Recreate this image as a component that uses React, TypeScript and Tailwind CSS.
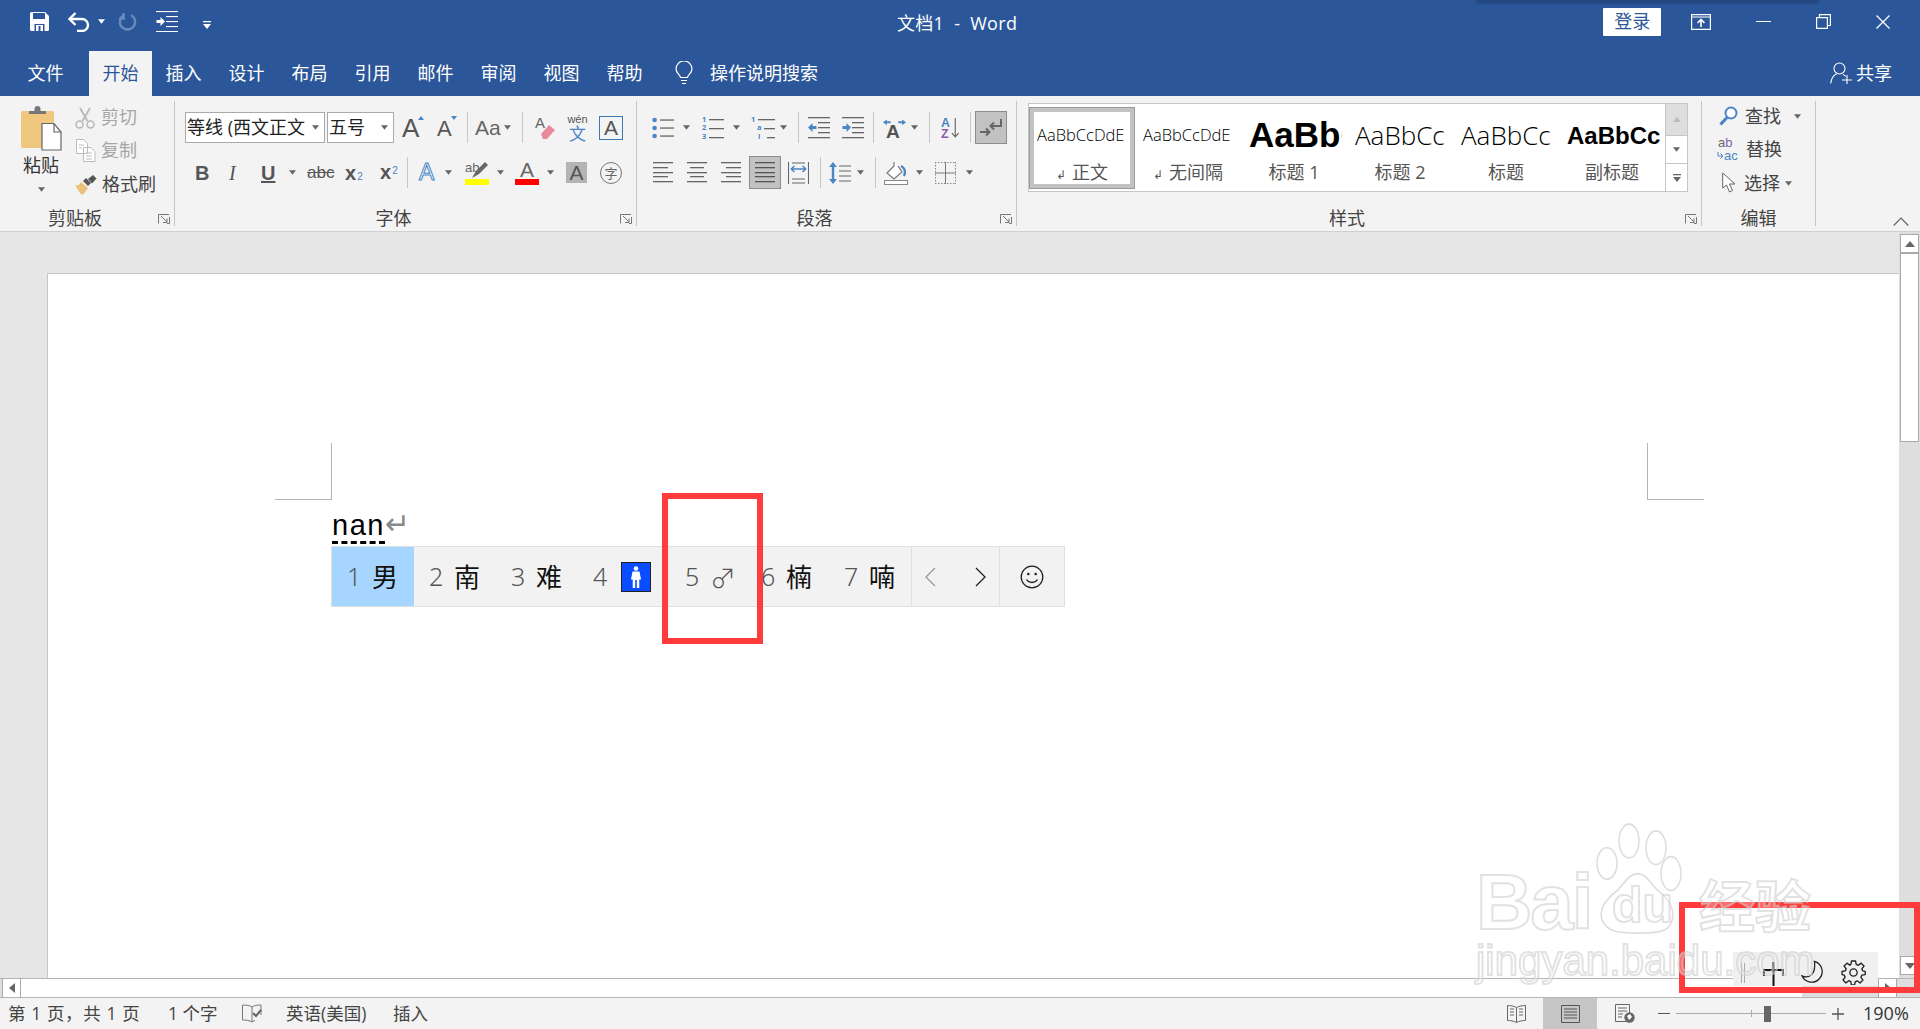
import React from "react";

const G = "#666666";
const B = "#4a86c5";

function Arrow({ className = "", color = "#666" }: { className?: string; color?: string }) {
  return (
    <svg viewBox="0 0 8 5" className={`w-[7px] h-[5px] shrink-0 ${className}`}>
      <path d="M0 0h8L4 5z" fill={color} />
    </svg>
  );
}

function Sep({ className = "" }: { className?: string }) {
  return <div className={`w-px h-[31px] bg-[#c8c8c8] shrink-0 ${className}`} />;
}

function Launcher() {
  return (
    <svg viewBox="0 0 12 10" className="absolute right-[4px] bottom-[2px] w-[12px] h-[10px]">
      <path d="M.5 9.5V.5H11M3 2l6 6M9 4.5V8.5H5M11.5 3v6.5H9" fill="none" stroke="#777" strokeWidth="1" />
    </svg>
  );
}

function Group({ w, label, children }: { w: string; label: string; children: React.ReactNode }) {
  return (
    <div className={`relative flex flex-col border-r border-[#c6c6c6] shrink-0 ${w}`}>
      {children}
      <div className="mt-auto h-[18px] leading-[20px] text-center pr-[24px] text-[18px] text-[#444]">{label}</div>
      <Launcher />
    </div>
  );
}

function Lines({ rows, w, h, anchor = "l", color = G }: { rows: number[]; w: number; h: number; anchor?: "l" | "c" | "r" | "j"; color?: string }) {
  const step = (h - 2) / (rows.length - 1);
  return (
    <svg viewBox={`0 0 ${w} ${h}`} width={w} height={h} className="shrink-0">
      {rows.map((l, i) => {
        const x = anchor === "l" || anchor === "j" ? 0 : anchor === "c" ? (w - l) / 2 : w - l;
        return <rect key={i} x={x} y={Math.round(i * step)} width={l} height="1.3" fill={color} />;
      })}
    </svg>
  );
}

function Bullets() {
  return (
    <svg viewBox="0 0 22 22" className="w-[22px] h-[22px] shrink-0">
      {[3, 11, 19].map((y) => (
        <g key={y}>
          <circle cx="2.6" cy={y} r="2.3" fill={B} />
          <rect x="8" y={y - 0.6} width="14" height="1.3" fill={G} />
        </g>
      ))}
    </svg>
  );
}

function Numbered() {
  return (
    <div className="flex w-[22px] h-[26px] shrink-0 items-center">
      <div className="w-[7px] shrink-0 text-[7.5px] leading-[8.500px] font-bold text-[#4a86c5]">
        <div>1</div>
        <div>2</div>
        <div>3</div>
      </div>
      <svg viewBox="0 0 15 24" className="w-[15px] h-[24px] shrink-0">
        {[3, 12, 21].map((y) => (
          <rect key={y} x="0" y={y} width="15" height="1.3" fill={G} />
        ))}
      </svg>
    </div>
  );
}

function Multi() {
  return (
    <div className="flex w-[24px] h-[26px] shrink-0 items-center">
      <div className="w-[13px] shrink-0 text-[7.5px] leading-[8.500px] font-bold text-[#4a86c5]">
        <div>1</div>
        <div className="pl-[6px]">a</div>
        <div className="pl-[7px]">i</div>
      </div>
      <svg viewBox="0 0 11 24" className="w-[11px] h-[24px] shrink-0 overflow-visible">
        <rect x="-6" y="3" width="17" height="1.3" fill={G} />
        <rect x="0" y="12" width="11" height="1.3" fill={G} />
        <rect x="3" y="21" width="8" height="1.3" fill={G} />
      </svg>
    </div>
  );
}

function IndentIcon({ out = false }: { out?: boolean }) {
  return (
    <svg viewBox="0 0 22 22" className="w-[22px] h-[22px] shrink-0">
      <rect y="0" width="22" height="1.3" fill={G} />
      <rect x="10" y="5" width="12" height="1.3" fill={G} />
      <rect x="10" y="10" width="12" height="1.3" fill={G} />
      <rect x="10" y="15" width="12" height="1.3" fill={G} />
      <rect y="20" width="22" height="1.3" fill={G} />
      {out ? (
        <path d="M0 10.5l4.5-4.5v3h4v3h-4v3z" fill={B} />
      ) : (
        <path d="M9 10.5L4.5 6v3H.5v3h4v3z" fill={B} />
      )}
    </svg>
  );
}

function Cell({ d, h, selected, className = "" }: { d: string; h: React.ReactNode; selected?: boolean; className?: string }) {
  return (
    <div className={`flex items-center pl-[15px] h-full shrink-0 ${selected ? "bg-[#a6d5ff]" : ""} ${className}`}>
      <span className="w-[25px] text-[25px] font-light text-[#555] font-['Noto_Sans']">{d}</span>
      {h}
    </div>
  );
}

function Hz({ t }: { t: string }) {
  return <span className="text-[26px] text-[#111] font-normal leading-none">{t}</span>;
}

function StyleItem({ selected, preview, label, arrow }: { selected?: boolean; preview: React.ReactNode; label: string; arrow?: boolean }) {
  return (
    <div className={`w-[106px] h-[82px] shrink-0 border ${selected ? "border-[#999]" : "border-transparent"}`}>
      <div className={`h-full flex flex-col border-[4px] overflow-hidden ${selected ? "border-[#c2c2c2]" : "border-transparent"}`}>
        <div className="h-[48px] pl-[3px] flex items-center overflow-hidden whitespace-nowrap text-black">{preview}</div>
        <div className="mt-[5px] h-[14px] leading-[14px] text-[18px] text-center text-[#555] whitespace-nowrap">
          {arrow && <span className="text-[12px] mr-[6px]">↲</span>}
          {label}
        </div>
      </div>
    </div>
  );
}

function TitleBar() {
  return (
    <div className="h-[51px] shrink-0 flex items-center pb-[8px] text-white relative">
      <svg viewBox="0 0 19 19" className="ml-[30px] w-[19px] h-[19px] shrink-0">
        <path d="M0 1.5A1.5 1.5 0 0 1 1.5 0H15l4 4v13.5a1.5 1.5 0 0 1-1.5 1.5h-16A1.5 1.5 0 0 1 0 17.500z" fill="#fff" />
        <rect x="3" y="1" width="12" height="6" fill="#2b579a" />
        <path d="M4.500 19v-7h10v7z" fill="#2b579a" />
        <rect x="6" y="13" width="7" height="6" fill="#fff" />
        <rect x="8.500" y="14" width="2" height="5" fill="#2b579a" />
      </svg>
      <svg viewBox="0 0 22 20" className="ml-[19px] w-[22px] h-[20px] shrink-0">
        <path d="M3 7h11a6 6 0 0 1 0 12H9" fill="none" stroke="#fff" strokeWidth="2.400" />
        <path d="M7.500 1L1.500 7l6 6" fill="none" stroke="#fff" strokeWidth="2.400" />
      </svg>
      <Arrow className="ml-[8px]" color="#fff" />
      <svg viewBox="0 0 20 20" className="ml-[13px] w-[19px] h-[19px] shrink-0">
        <path d="M6 3.500A8 8 0 1 0 14 3.500M6 1v6H1" fill="none" stroke="#6a8cbc" strokeWidth="2.400" />
      </svg>
      <svg viewBox="0 0 22 21" className="ml-[19px] w-[22px] h-[21px] shrink-0">
        <rect width="22" height="1.100" fill="#fff" />
        <rect x="10" y="5" width="12" height="1.100" fill="#fff" />
        <rect x="10" y="10" width="12" height="1.100" fill="#fff" />
        <rect x="10" y="15" width="12" height="1.100" fill="#fff" />
        <rect y="20" width="22" height="1.100" fill="#fff" />
        <path d="M9 10.500L4.500 6v3H.5v3h4v3z" fill="#fff" />
      </svg>
      <svg viewBox="0 0 8 8" className="ml-[25px] mt-[7px] w-[8px] h-[8px] shrink-0">
        <rect width="8" height="1.300" fill="#fff" />
        <path d="M0 3h8L4 8z" fill="#fff" />
      </svg>
      <div className="ml-[686px] mt-[3px] text-[18px] leading-none whitespace-pre tracking-[0.3px]">文档1  -  Word</div>
      <div className="ml-[586px] w-[58px] h-[28px] rounded-[1px] bg-white text-[#2b579a] text-[18px] flex items-center justify-center">登录</div>
      <svg viewBox="0 0 20 16" className="ml-[30px] w-[20px] h-[16px] shrink-0">
        <path d="M.6.6h18.800v14.800H.6zM1 3h18" fill="none" stroke="#fff" strokeWidth="1.200" />
        <path d="M10 13V6M6.500 9l3.500-3.500L13.500 9" fill="none" stroke="#fff" strokeWidth="1.600" />
      </svg>
      <div className="ml-[45px] w-[15px] h-[1.500px] bg-white shrink-0" />
      <svg viewBox="0 0 15 15" className="ml-[45px] w-[15px] h-[15px] shrink-0">
        <path d="M.6 3.600h10.800v10.800H.6zM3.500 3.500V.6h10.900v10.900h-3" fill="none" stroke="#fff" strokeWidth="1.200" />
      </svg>
      <svg viewBox="0 0 14 14" className="ml-[45px] w-[14px] h-[14px] shrink-0">
        <path d="M.5.5l13 13M13.500.5l-13 13" fill="none" stroke="#fff" strokeWidth="1.300" />
      </svg>
    </div>
  );
}

function TabRow() {
  const tabs = ["文件", "开始", "插入", "设计", "布局", "引用", "邮件", "审阅", "视图", "帮助"];
  return (
    <div className="h-[45px] shrink-0 flex items-stretch pl-[14px] text-white text-[18px]">
      {tabs.map((t, i) => (
        <div key={t} className={`w-[63px] flex items-center justify-center ${i === 1 ? "ml-[12px] bg-[#f3f3f3] text-[#2b579a]" : ""}`}>
          {t}
        </div>
      ))}
      <svg viewBox="0 0 18 24" className="ml-[19px] mt-[10px] w-[18px] h-[24px] shrink-0">
        <path d="M5.500 16.500C5 13.500 1 12 1 8a8 8 0 0 1 16 0c0 4-4 5.500-4.500 8.500zM6 19.500h6M7 22.500h4" fill="none" stroke="#fff" strokeWidth="1.200" />
      </svg>
      <div className="ml-[17px] flex items-center">操作说明搜索</div>
      <svg viewBox="0 0 22 22" className="ml-[1012px] mt-[11px] w-[22px] h-[22px] shrink-0">
        <circle cx="9.500" cy="6.500" r="5.500" fill="none" stroke="#fff" strokeWidth="1.100" />
        <path d="M.7 21.500c.5-5 3.300-8.500 5.800-9.800M13 12.500c1 .5 2 1.200 2.700 2M12 18h10M17 13v9" fill="none" stroke="#fff" strokeWidth="1.100" />
      </svg>
      <div className="ml-[4px] flex items-center">共享</div>
    </div>
  );
}

function Clipboard() {
  return (
    <Group w="w-[175px]" label="剪贴板">
      <div className="flex">
        <div className="ml-[21px] w-[40px] flex flex-col items-center">
          <svg viewBox="0 0 41 45" className="mt-[5px] w-[41px] h-[45px] shrink-0">
            <rect x="0" y="5" width="33" height="37" rx="2" fill="#efc77f" />
            <path d="M8 8V5h5.500V3a3 3 0 0 1 6 0v2H25v3z" fill="#777" />
            <path d="M21 17.500h12l7 8.500v18H21z" fill="#fff" stroke="#666" strokeWidth="1.200" />
            <path d="M33 17.500V26h7" fill="none" stroke="#666" strokeWidth="1.200" />
          </svg>
          <div className="mt-[5px] text-[18px] leading-[18px] text-[#333] whitespace-nowrap">粘贴</div>
          <Arrow className="mt-[13px]" />
        </div>
        <div className="ml-[14px] flex flex-col">
          <div className="flex items-center h-[33px]">
            <svg viewBox="0 0 20 22" className="w-[20px] h-[22px] shrink-0">
              <path d="M5 1l7.500 13M15 1L7.500 14" fill="none" stroke="#b8b8b8" strokeWidth="1.800" />
              <circle cx="4.500" cy="17.500" r="3.500" fill="none" stroke="#b8b8b8" strokeWidth="1.500" />
              <circle cx="15.500" cy="17.500" r="3.500" fill="none" stroke="#b8b8b8" strokeWidth="1.500" />
            </svg>
            <span className="ml-[6px] text-[18px] text-[#a6a6a6]">剪切</span>
          </div>
          <div className="flex items-center h-[33px]">
            <svg viewBox="0 0 20 23" className="w-[20px] h-[23px] shrink-0 ml-[1px] -mr-[1px]">
              <path d="M.5.5h7l4 4v10H.5zM7.500 8.500h7.500l4 4v10H7.500z" fill="#fff" stroke="#bbb" />
              <path d="M3 6h5M3 9h3M10 14h6M10 17h6M10 20h6" stroke="#bbb" />
            </svg>
            <span className="ml-[6px] text-[18px] text-[#a6a6a6]">复制</span>
          </div>
          <div className="flex items-center h-[33px] mt-[1px]">
            <svg viewBox="0 0 23 20" className="w-[23px] h-[20px] -ml-[1px] -mr-[1px] shrink-0">
              <path d="M1 10c3 1 4 0 6-3l7 6c-2 3-4 6-6 7C6 18 3 14 1 10z" fill="#ebc17b" />
              <path d="M9 6l3-3 5 5-3 3z" fill="#555" />
              <path d="M14 4l5-4 3.500 3.500-4.500 5z" fill="#555" />
            </svg>
            <span className="ml-[6px] text-[18px] text-[#444] whitespace-nowrap">格式刷</span>
          </div>
        </div>
      </div>
    </Group>
  );
}

function FontGroup() {
  return (
    <Group w="w-[462px]" label="字体">
      <div className="mt-[10px] h-[33px] flex items-center pl-[10px]">
        <div className="w-[140px] h-[31px] shrink-0 bg-white border border-[#aaa] flex items-center pl-[1px] text-[18px] text-[#222] whitespace-nowrap">
          等线 (西文正文
          <Arrow className="ml-auto mr-[5px]" />
        </div>
        <div className="ml-[2px] w-[67px] h-[31px] shrink-0 bg-white border border-[#aaa] flex items-center pl-[1px] text-[18px] text-[#222]">
          五号
          <Arrow className="ml-auto mr-[5px]" />
        </div>
        <div className="ml-[8px] w-[20px] h-[24px] relative text-[26px] leading-[24px] text-[#555] shrink-0 font-['Liberation_Sans']">
          A
          <svg viewBox="0 0 6 4" className="absolute -right-[2px] top-[0px] w-[6px] h-[4px]"><path d="M3 0l3 4H0z" fill={B} /></svg>
        </div>
        <div className="ml-[15px] w-[19px] h-[24px] relative text-[22px] leading-[26px] text-[#555] shrink-0 font-['Liberation_Sans']">
          A
          <svg viewBox="0 0 6 4" className="absolute -right-[1px] top-[0px] w-[6px] h-[4px]"><path d="M0 0h6L3 4z" fill={B} /></svg>
        </div>
        <Sep className="ml-[11px]" />
        <span className="ml-[7px] w-[25px] text-[21px] leading-none text-[#666] font-['Liberation_Sans'] whitespace-nowrap shrink-0">Aa</span>
        <Arrow className="ml-[4px]" />
        <Sep className="ml-[11px]" />
        <div className="ml-[12px] w-[20px] h-[24px] shrink-0 flex flex-col relative">
          <span className="h-[14px] text-[15px] leading-[14px] text-[#666] font-['Liberation_Sans']">A</span>
          <svg viewBox="0 0 20 24" className="absolute left-0 top-0 w-[20px] h-[24px]">
            <path d="M6 18l8-9 6 5-8 9h-4z" fill="#e98a9a" />
          </svg>
        </div>
        <div className="ml-[12px] w-[21px] shrink-0 flex flex-col items-center leading-none">
          <span className="text-[11px] leading-[11px] font-['Liberation_Sans'] text-[#555]">wén</span>
          <span className="text-[17px] leading-[17px] text-[#4a86c5]">文</span>
        </div>
        <div className="ml-[11px] w-[24px] h-[24px] border border-[#3f78b4] flex items-center justify-center text-[21px] leading-none text-[#555] font-['Liberation_Sans'] shrink-0">A</div>
      </div>
      <div className="mt-[12px] h-[33px] flex items-center pl-[20px] font-['Liberation_Sans'] text-[#555]">
        <span className="w-[12px] text-[20px] font-bold leading-none shrink-0">B</span>
        <span className="ml-[22px] w-[12px] text-[20px] italic font-['Liberation_Serif'] leading-none shrink-0">I</span>
        <span className="ml-[20px] w-[15px] text-[20px] underline font-bold leading-none shrink-0">U</span>
        <Arrow className="ml-[13px]" />
        <span className="ml-[11px] w-[24px] text-[17px] line-through leading-none shrink-0">abc</span>
        <span className="ml-[14px] w-[19px] text-[20px] font-bold leading-none shrink-0 whitespace-nowrap">x<span className="text-[10px] font-normal text-[#4a86c5] ml-[1px]">2</span></span>
        <span className="ml-[16px] w-[18px] text-[20px] font-bold leading-none shrink-0 whitespace-nowrap -mt-[2px]">x<sup className="text-[10px] font-normal text-[#4a86c5] ml-[1px]">2</sup></span>
        <Sep className="ml-[9px]" />
        <span className="ml-[11px] w-[17px] text-[23px] leading-none text-white shrink-0 [-webkit-text-stroke:1px_#4a86c5]">A</span>
        <Arrow className="ml-[9px]" />
        <div className="ml-[13px] w-[24px] h-[24px] flex flex-col shrink-0">
          <svg viewBox="0 0 24 18" className="w-[24px] h-[18px]">
            <text x="0" y="11" fontSize="13" fill="#666" fontFamily="Liberation Sans">ab</text>
            <path d="M7 17l4-7 9-9 3 3-9 9z" fill="#666" />
          </svg>
          <div className="h-[6px] bg-[#ffff00]" />
        </div>
        <Arrow className="ml-[8px]" />
        <div className="ml-[11px] w-[24px] h-[24px] flex flex-col items-center shrink-0">
          <span className="h-[18px] text-[21px] leading-[18px] text-[#666]">A</span>
          <div className="w-full h-[6px] bg-[#ff0000]" />
        </div>
        <Arrow className="ml-[8px]" />
        <div className="ml-[12px] w-[21px] h-[21px] bg-[#b4b4b4] flex items-center justify-center text-[21px] leading-none text-[#555] shrink-0">A</div>
        <div className="ml-[13px] w-[22px] h-[22px] rounded-full border-[1.500px] border-[#777] flex items-center justify-center text-[13px] text-[#666] shrink-0 font-['Noto_Sans_CJK_SC']">字</div>
      </div>
    </Group>
  );
}

function ParaGroup() {
  return (
    <Group w="w-[380px]" label="段落">
      <div className="mt-[10px] h-[33px] flex items-center pl-[15px]">
        <Bullets />
        <Arrow className="ml-[9px]" />
        <div className="ml-[12px]"><Numbered /></div>
        <Arrow className="ml-[9px]" />
        <div className="ml-[11px]"><Multi /></div>
        <Arrow className="ml-[5px]" />
        <Sep className="ml-[11px]" />
        <div className="ml-[9px]"><IndentIcon out /></div>
        <div className="ml-[12px]"><IndentIcon /></div>
        <Sep className="ml-[9px]" />
        <svg viewBox="0 0 24 20" className="ml-[9px] w-[23px] h-[20px] shrink-0">
          <text x="3" y="20" fontSize="20" fontWeight="700" fill="#555" fontFamily="Liberation Sans">A</text>
          <path d="M0 4l4-3v2h4v2H4v2zM24 4l-4-3v2h-4v2h4v2z" fill={B} />
        </svg>
        <Arrow className="ml-[5px]" />
        <Sep className="ml-[11px]" />
        <svg viewBox="0 0 20 24" className="ml-[11px] w-[19px] h-[23px] shrink-0">
          <text x="0" y="11" fontSize="13" fontWeight="700" fill={B} fontFamily="Liberation Sans">A</text>
          <text x="0" y="23" fontSize="13" fontWeight="700" fill="#8a5aa8" fontFamily="Liberation Sans">Z</text>
          <path d="M15 2v20M11.500 18l3.500 4 3.500-4" fill="none" stroke="#666" strokeWidth="1.200" />
        </svg>
        <Sep className="ml-[10px]" />
        <div className="ml-[4px] w-[32px] h-[33px] bg-[#c2c2c2] border border-[#8c8c8c] flex items-center justify-center shrink-0">
          <svg viewBox="0 0 22 20" className="w-[22px] h-[20px]">
            <path d="M21 1v7H11M14 4.500L10.500 8l3.500 3.500" fill="none" stroke="#666" strokeWidth="2" />
            <path d="M0 14h9M6 10.500L9.500 14 6 17.500" fill="none" stroke="#666" strokeWidth="2" />
          </svg>
        </div>
      </div>
      <div className="mt-[12px] h-[33px] flex items-center pl-[16px]">
        <Lines w={20} h={21} rows={[20, 15, 20, 15, 20]} />
        <div className="ml-[14px]"><Lines w={20} h={21} rows={[20, 14, 20, 14, 20]} anchor="c" /></div>
        <div className="ml-[14px]"><Lines w={20} h={21} rows={[20, 15, 20, 15, 20]} anchor="r" /></div>
        <div className="ml-[8px] w-[32px] h-[33px] bg-[#c2c2c2] border border-[#8c8c8c] flex items-center justify-center shrink-0">
          <Lines w={20} h={21} rows={[20, 20, 20, 20, 20]} color="#555" />
        </div>
        <svg viewBox="0 0 21 22" className="ml-[7px] w-[21px] h-[22px] shrink-0">
          <path d="M.5 0v22M20.500 0v22M4 1h13M4 21h13M4 17h13" stroke="#666" strokeWidth="1.100" fill="none" />
          <path d="M3 7h15M3 7l3.500-3M3 7l3.500 3M18 7l-3.500-3M18 7l-3.500 3" stroke={B} strokeWidth="1.500" fill="none" />
        </svg>
        <Sep className="ml-[11px]" />
        <svg viewBox="0 0 22 24" className="ml-[8px] w-[22px] h-[24px] shrink-0">
          <path d="M4 4v16" stroke={B} strokeWidth="2.400" />
          <path d="M0 6l4-5 4 5zM0 18l4 5 4-5z" fill={B} />
          <path d="M10 5h12M10 10h12M10 15h12M10 20h12" stroke={G} strokeWidth="1.200" />
        </svg>
        <Arrow className="ml-[6px]" />
        <Sep className="ml-[11px]" />
        <svg viewBox="0 0 24 24" className="ml-[8px] w-[24px] h-[24px] shrink-0">
          <path d="M10 1v4l-7 7 7 6 8-7-4-6" fill="#fff" stroke="#777" strokeWidth="1.200" />
          <path d="M17 5c4 2 5 6 3 10" fill="none" stroke={B} strokeWidth="2.400" />
          <rect x=".5" y="19.500" width="23" height="4" fill="#fff" stroke="#888" />
        </svg>
        <Arrow className="ml-[8px]" />
        <svg viewBox="0 0 21 22" className="ml-[12px] w-[21px] h-[22px] shrink-0">
          <path d="M.5 0v22M20.500 0v22M0 .5h21M0 21.500h21" stroke="#888" strokeDasharray="1.500 1.500" />
          <path d="M10.500 0v22M0 11h21" stroke="#777" />
        </svg>
        <Arrow className="ml-[10px]" />
      </div>
    </Group>
  );
}

function StyleGroup() {
  const scrollBtn = "flex-1 flex items-center justify-center border-t border-[#c6c6c6]";
  return (
    <Group w="w-[685px]" label="样式">
      <div className="mt-[2px] ml-[11px] w-[660px] h-[89px] flex items-center bg-white border border-[#c6c6c6]">
        <StyleItem selected arrow label="正文" preview={<span className="text-[16.500px] font-light">AaBbCcDdE</span>} />
        <StyleItem arrow label="无间隔" preview={<span className="text-[16.500px] font-light">AaBbCcDdE</span>} />
        <StyleItem label="标题 1" preview={<span className="text-[35px] font-bold font-['Liberation_Sans']">AaBbC</span>} />
        <StyleItem label="标题 2" preview={<span className="text-[26px] font-light">AaBbCc</span>} />
        <StyleItem label="标题" preview={<span className="text-[26px] font-light">AaBbCc</span>} />
        <StyleItem label="副标题" preview={<span className="text-[24px] font-bold font-['Liberation_Sans']">AaBbCc</span>} />
        <div className="ml-auto w-[22px] h-full flex flex-col border-l border-[#c6c6c6]">
          <div className="h-[31px] bg-[#dedede] flex items-center justify-center">
            <svg viewBox="0 0 8 5" className="w-[8px] h-[5px]"><path d="M4 0l4 5H0z" fill="#bbb" /></svg>
          </div>
          <div className={scrollBtn}><Arrow /></div>
          <div className={scrollBtn}>
            <svg viewBox="0 0 8 8" className="w-[8px] h-[8px]"><rect width="8" height="1.300" fill="#666" /><path d="M0 3h8L4 8z" fill="#666" /></svg>
          </div>
        </div>
      </div>
    </Group>
  );
}

function EditGroup() {
  const row = "flex items-center h-[30px] text-[18px] text-[#444]";
  return (
    <div className="relative flex flex-col w-[114px] shrink-0 border-r border-[#c6c6c6]">
      <div className={`${row} pl-[17px]`}>
        <svg viewBox="0 0 19 20" className="w-[19px] h-[20px] shrink-0">
          <circle cx="12" cy="7" r="5.500" fill="#fff" stroke={B} strokeWidth="2" />
          <path d="M8 11.500L1.500 18.500" stroke={B} strokeWidth="3.200" />
        </svg>
        <span className="ml-[7px]">查找</span>
        <Arrow className="ml-[13px]" />
      </div>
      <div className={`${row} pl-[15px] mt-[3px]`}>
        <div className="w-[23px] shrink-0 flex flex-col text-[13px] leading-[13px] font-['Liberation_Sans'] text-[#666]">
          <div className="pl-[1px] whitespace-nowrap">a<span className="text-[#8a5aa8]">b</span></div>
          <div className="flex items-center whitespace-nowrap text-[#4a86c5]">
            <svg viewBox="0 0 7 8" className="w-[7px] h-[8px] shrink-0">
              <path d="M1 0v4h5M3.500 1.500L6 4 3.500 6.500" fill="none" stroke={B} strokeWidth="1" />
            </svg>
            ac
          </div>
        </div>
        <span className="ml-[6px]">替换</span>
      </div>
      <div className={`${row} pl-[20px] mt-[4px]`}>
        <svg viewBox="0 0 14 22" className="w-[14px] h-[22px] shrink-0">
          <path d="M.7 1v15l3.800-3 3 7 3-1.500-3-6.500H13z" fill="#fff" stroke="#666" strokeWidth="1" />
        </svg>
        <span className="ml-[8px]">选择</span>
        <Arrow className="ml-[5px]" />
      </div>
      <div className="mt-auto h-[18px] leading-[20px] text-center text-[18px] text-[#444]">编辑</div>
    </div>
  );
}

function Ribbon() {
  return (
    <div className="h-[136px] shrink-0 bg-[#f3f3f3] border-b border-[#d0d0d0] flex py-[5px] text-[#444]">
      <Clipboard />
      <FontGroup />
      <ParaGroup />
      <StyleGroup />
      <EditGroup />
      <div className="flex-1 flex items-end justify-end pr-[11px]">
        <svg viewBox="0 0 16 9" className="w-[16px] h-[9px]">
          <path d="M.7 8.500L8 1l7.300 7.500" fill="none" stroke="#666" strokeWidth="1.200" />
        </svg>
      </div>
    </div>
  );
}

function Document() {
  return (
    <div className="flex-1 flex min-h-0 bg-[#e6e6e6]">
      <div className="w-[47px] shrink-0" />
      <div className="flex-1 mt-[41px] bg-white border-t border-l border-[#c6c6c6] relative pl-[284px] pt-[236px]">
        <div className="absolute left-[227px] top-[169px] w-[57px] h-[57px] border-r border-b border-[#b4b4b4]" />
        <div className="absolute left-[1599px] top-[169px] w-[57px] h-[57px] border-l border-b border-[#b4b4b4]" />
        <div className="flex items-start h-[36px]">
          <span className="border-b-[3px] border-dashed border-black text-[29px] leading-[31px] text-black tracking-[1.500px] font-['Liberation_Sans']">nan</span>
          <span className="-mt-[2px] text-[30px] leading-[32px] text-[#888] font-['DejaVu_Sans']">↵</span>
        </div>
        <div className="absolute left-[283px] top-[272px] w-[734px] h-[61px] flex items-stretch bg-[#f2f2f2] border border-[#dfdfdf]">
          <Cell selected d="1" h={<Hz t="男" />} className="w-[82px]" />
          <Cell d="2" h={<Hz t="南" />} className="w-[82px]" />
          <Cell d="3" h={<Hz t="难" />} className="w-[82px]" />
          <Cell
            d="4"
            className="w-[92px]"
            h={
              <div className="ml-[3px] w-[30px] h-[30px] bg-[#0a4cff] border border-[#222] flex items-center justify-center">
                <svg viewBox="0 0 12 22" className="w-[12px] h-[22px]">
                  <circle cx="6" cy="2.500" r="2.300" fill="#fff" />
                  <path d="M2.500 5.500h7l1.500 8H9.300V22H6.800v-8H5.200v8H2.700v-8.500H1z" fill="#fff" />
                </svg>
              </div>
            }
          />
          <Cell d="5" className="w-[76px]" h={<span className="text-[26px] leading-none text-[#555] font-['Noto_Sans_CJK_SC'] font-light">♂</span>} />
          <Cell d="6" h={<Hz t="楠" />} className="w-[83px]" />
          <Cell d="7" h={<Hz t="喃" />} className="w-[82px]" />
          <div className="w-[88px] shrink-0 border-l border-[#dfdfdf] flex items-center pl-[12px]">
            <svg viewBox="0 0 12 20" className="w-[12px] h-[20px]"><path d="M11 1L2 10l9 9" fill="none" stroke="#999" strokeWidth="1.300" /></svg>
            <svg viewBox="0 0 12 20" className="ml-[39px] w-[12px] h-[20px]"><path d="M1 1l9 9-9 9" fill="none" stroke="#222" strokeWidth="1.300" /></svg>
          </div>
          <div className="flex-1 border-l border-[#dfdfdf] flex items-center justify-center">
            <svg viewBox="0 0 24 24" className="w-[24px] h-[24px]">
              <circle cx="12" cy="12" r="10.800" fill="none" stroke="#222" strokeWidth="1.300" />
              <circle cx="8.300" cy="9" r="1.300" fill="#222" />
              <circle cx="15.700" cy="9" r="1.300" fill="#222" />
              <path d="M6.500 14.500c2.500 4 8.500 4 11 0" fill="none" stroke="#222" strokeWidth="1.300" />
            </svg>
          </div>
        </div>
      </div>
      <div className="w-[21px] shrink-0 bg-[#dedede] flex flex-col items-start pl-[1px]">
        <div className="mt-[2px] w-[19px] h-[19px] bg-white border border-[#aaa] flex items-center justify-center">
          <svg viewBox="0 0 10 6" className="w-[10px] h-[6px]"><path d="M5 0l5 6H0z" fill="#666" /></svg>
        </div>
        <div className="w-[19px] h-[189px] bg-white border border-[#aaa]" />
        <div className="mt-auto mb-[3px] w-[19px] h-[19px] bg-white border border-[#aaa] flex items-center justify-center">
          <svg viewBox="0 0 10 6" className="w-[10px] h-[6px]"><path d="M0 0h10L5 6z" fill="#666" /></svg>
        </div>
      </div>
    </div>
  );
}

function HScroll() {
  return (
    <div className="h-[20px] shrink-0 flex items-stretch bg-[#dedede] border-y border-[#b4b4b4]">
      <div className="ml-[2px] w-[19px] bg-white border-x border-[#aaa] flex items-center justify-center shrink-0">
        <svg viewBox="0 0 6 10" className="w-[6px] h-[10px]"><path d="M6 0v10L0 5z" fill="#666" /></svg>
      </div>
      <div className="w-[1781px] bg-white shrink-0" />
      <div className="w-[76px] shrink-0" />
      <div className="w-[19px] bg-white border-x border-[#aaa] flex items-center justify-center shrink-0">
        <svg viewBox="0 0 6 10" className="w-[6px] h-[10px]"><path d="M0 0v10l6-5z" fill="#666" /></svg>
      </div>
    </div>
  );
}

function StatusBar() {
  return (
    <div className="h-[31px] shrink-0 bg-[#f3f3f3] flex items-center text-[17.500px] text-[#444] pl-[8px]">
      <span className="w-[160px] shrink-0 whitespace-nowrap tracking-[0.6px]">第 1 页，共 1 页</span>
      <span className="w-[74px] shrink-0 whitespace-nowrap">1 个字</span>
      <div className="w-[44px] shrink-0">
        <svg viewBox="0 0 20 20" className="w-[20px] h-[20px]">
          <path d="M10 3C8 1.500 4 1 .5 1v15c3.500 0 7.500.5 9.500 2V3c2-1.500 5-2 9-2v10M10 18c1-.7 2-1.200 3-1.500" fill="none" stroke="#777" />
          <path d="M11 9l3 3 5-6" fill="none" stroke="#666" strokeWidth="2" />
        </svg>
      </div>
      <span className="w-[107px] shrink-0 whitespace-nowrap">英语(美国)</span>
      <span className="shrink-0">插入</span>
      <div className="flex-1" />
      <svg viewBox="0 0 19 18" className="w-[19px] h-[18px] shrink-0">
        <path d="M9.500 2.500C7 1 3 .5.500.5v15c2.500 0 6.500.5 9 2 2.500-1.500 6.500-2 9-2V.5c-2.500 0-6.500.5-9 2zM9.500 2.500v15M3 4h4M3 7h4M3 10h4M12 4h4M12 7h4M12 10h4" fill="none" stroke="#666" />
      </svg>
      <div className="ml-[17px] w-[54px] h-full bg-[#c6c6c6] flex items-center justify-center shrink-0">
        <svg viewBox="0 0 19 18" className="w-[19px] h-[18px]">
          <path d="M.5.500h18v17H.5zM3 4h13M3 7h13M3 10h13M3 13h13" fill="none" stroke="#555" />
        </svg>
      </div>
      <svg viewBox="0 0 20 19" className="ml-[18px] w-[20px] h-[19px] shrink-0">
        <path d="M.5.500h14v17H.5zM3 4h9M3 7h9M3 10h5M3 13h4" fill="none" stroke="#666" />
        <circle cx="14.500" cy="13.500" r="5.200" fill="#666" />
        <path d="M12 12l3-2 2 3-3 3z" fill="#fff" />
      </svg>
      <div className="ml-[23px] w-[12px] h-[1.500px] bg-[#555] shrink-0" />
      <div className="ml-[6px] w-[150px] h-[18px] relative shrink-0">
        <div className="absolute left-0 right-0 top-[8.500px] h-px bg-[#aaa]" />
        <div className="absolute left-[75px] top-[5px] w-px h-[7px] bg-[#aaa]" />
        <div className="absolute left-[88px] top-[1px] w-[7px] h-[16px] bg-[#666]" />
      </div>
      <svg viewBox="0 0 12 12" className="ml-[6px] w-[12px] h-[12px] shrink-0">
        <path d="M0 6h12M6 0v12" stroke="#555" strokeWidth="1.300" />
      </svg>
      <span className="ml-[19px] w-[57px] shrink-0 text-[18px] text-[#333]">190%</span>
    </div>
  );
}

function Overlays() {
  const wm = "absolute pointer-events-none whitespace-nowrap text-white/25 font-['Liberation_Sans'] [-webkit-text-stroke:2px_#cfcfcf99] blur-[0.6px]";
  return (
    <>
      <div className="absolute left-[1733px] top-[952px] w-[145px] h-[34px] bg-[#f0f0f0] flex items-center">
        <div className="ml-[8px] w-[4px] h-[20px] mt-[8px] border-l border-r border-[#aaa] shrink-0" />
        <svg viewBox="0 0 21 24" className="ml-[18px] mt-[10px] w-[21px] h-[24px] shrink-0">
          <path d="M1 14V8h19v6M10.500 0v24" fill="none" stroke="#111" strokeWidth="2" />
        </svg>
        <svg viewBox="0 0 24 24" className="ml-[17px] mt-[6px] w-[23px] h-[24px] shrink-0">
          <path d="M14 1a11 11 0 1 1-13 15c6 3 15 0 13-15z" fill="none" stroke="#222" strokeWidth="1.300" />
        </svg>
        <svg viewBox="0 0 24 24" className="ml-[17px] mt-[6px] w-[25px] h-[25px] shrink-0" fill="none" stroke="#222" strokeWidth="1.300" strokeLinejoin="round">
          <circle cx="12" cy="12" r="3.500" />
          <path d="M10 1h4l.6 3.200 2 .9L19.300 3l2.800 2.800-2.100 2.700.9 2L23.200 11v3l-3.200.6-.9 2 2 2.700-2.800 2.800-2.700-2.100-2 .9L13 24h-3l-.6-3.200-2-.9L4.700 22 2 19.200l2-2.700-.9-2L1 14v-3l3.100-.5.900-2L3 5.800 5.800 3l2.700 2 1-.9z" />
        </svg>
      </div>
      <div className="absolute left-[662px] top-[493px] w-[101px] h-[151px] border-[6px] border-[#ff3b3b] pointer-events-none" />
      <div className="absolute left-[1679px] top-[902px] w-[241px] h-[91px] border-[6px] border-[#ff3b3b] pointer-events-none" />
      <svg viewBox="0 0 90 105" preserveAspectRatio="none" className="absolute left-[1596px] top-[823px] w-[90px] h-[118px] pointer-events-none blur-[0.4px]" fill="#ffffff" fillOpacity="0.3" stroke="#d4d4d4" strokeOpacity="0.8" strokeWidth="1.500">
        <ellipse cx="33" cy="16" rx="10" ry="15" />
        <ellipse cx="60" cy="22" rx="10" ry="15" />
        <ellipse cx="11" cy="36" rx="10" ry="14" />
        <ellipse cx="75" cy="45" rx="10" ry="15" />
        <path d="M42 45c8 0 12 9 20 15 8 6 18 15 14 27-3 10-14 11-34 11-20 0-31-1-36-12-4-11 7-20 14-25 8-6 12-16 22-16z" />
      </svg>
      <span className={`${wm} left-[1476px] top-[857px] text-[78px] font-bold leading-[90px] tracking-[-2px]`}>Bai</span>
      <span className={`${wm} left-[1612px] top-[880px] text-[50px] font-bold leading-[50px]`}>du</span>
      <span className={`${wm} left-[1699px] top-[871px] text-[56px] font-bold leading-[64px] font-['Noto_Sans_CJK_SC']`}>经验</span>
      <span className={`${wm} left-[1476px] top-[938px] text-[42px] leading-[46px]`}>jingyan.baidu.com</span>
      <div className="absolute left-[1476px] top-0 w-[343px] h-[3px] bg-[#1f3f70] blur-[1.500px] pointer-events-none" />
    </>
  );
}

export default function App() {
  return (
    <div className="relative w-[1920px] h-[1029px] overflow-hidden flex flex-col bg-[#2b579a] font-['Open_Sans','Noto_Sans_CJK_SC',sans-serif]">
      <TitleBar />
      <TabRow />
      <Ribbon />
      <Document />
      <HScroll />
      <StatusBar />
      <Overlays />
    </div>
  );
}
